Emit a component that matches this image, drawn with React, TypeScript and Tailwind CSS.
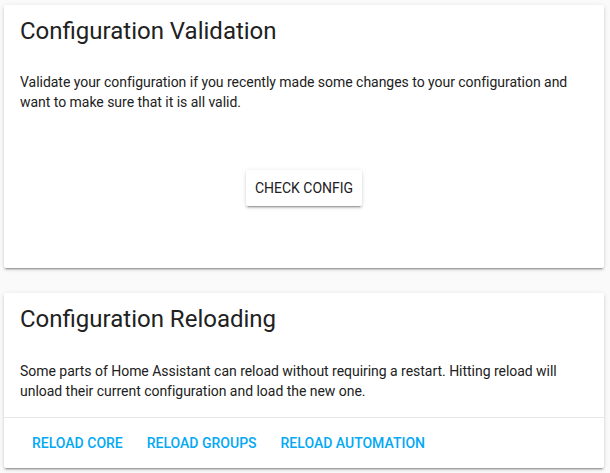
import React from "react";

const cardShadow =
  "shadow-[0_2px_2px_0_rgba(0,0,0,0.14),0_1px_5px_0_rgba(0,0,0,0.12),0_3px_1px_-2px_rgba(0,0,0,0.2)]";

export default function App() {
  return (
    <div
      className="w-[610px] h-[473px] bg-[#fafafa] overflow-hidden pt-[5px] pl-[4px]"
      style={{ fontFamily: "Roboto, 'Liberation Sans', sans-serif" }}
    >
      <div className={`w-[600px] h-[263px] bg-white rounded-[2px] ${cardShadow} flex flex-col`}>
        <div className="px-4 pt-[10px] text-[24px] leading-[32px] text-[#212121]">
          Configuration Validation
        </div>
        <div className="px-4 mt-[25px] text-[14px] leading-[20px] text-[#212121] tracking-[-0.03px]">
          Validate your configuration if you recently made some changes to your configuration and
          want to make sure that it is all valid.
        </div>
        <div className="flex justify-center mt-[58px]">
          <button
            className={`h-9 w-[116px] bg-white rounded-[2px] text-[14px] font-normal uppercase text-[#212121] shadow-[0_2px_2px_0_rgba(0,0,0,0.14),0_1px_5px_0_rgba(0,0,0,0.12),0_3px_1px_-2px_rgba(0,0,0,0.2)]`}
          >
            Check Config
          </button>
        </div>
      </div>

      <div className={`mt-[25px] w-[600px] h-[175px] bg-white rounded-[2px] ${cardShadow} flex flex-col`}>
        <div className="px-4 pt-[10px] text-[24px] leading-[32px] text-[#212121]">
          Configuration Reloading
        </div>
        <div className="px-4 mt-[26px] text-[14px] leading-[20px] text-[#212121] tracking-[-0.03px]">
          Some parts of Home Assistant can reload without requiring a restart. Hitting reload will
          unload their current configuration and load the new one.
        </div>
        <div className="mt-[16px] border-t border-[#e8e8e8] px-4 py-[7px] flex">
          <button className="h-9 px-3 text-[14px] font-medium uppercase text-[#03a9f4]">
            Reload Core
          </button>
          <button className="h-9 px-3 text-[14px] font-medium uppercase text-[#03a9f4]">
            Reload Groups
          </button>
          <button className="h-9 px-3 text-[14px] font-medium uppercase text-[#03a9f4]">
            Reload Automation
          </button>
        </div>
      </div>
    </div>
  );
}
